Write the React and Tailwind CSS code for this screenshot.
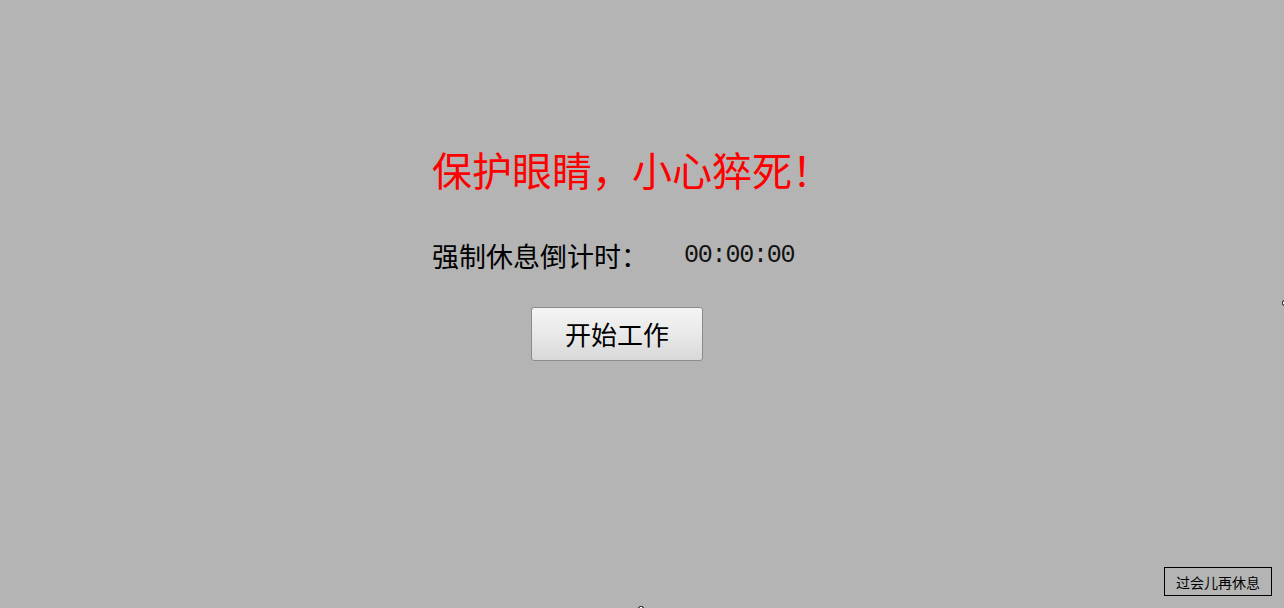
export default function App() {
  return (
    <div className="relative h-[608px] w-full overflow-hidden bg-[#b4b4b4] font-['Noto_Sans_CJK_SC',sans-serif]">
      <div className="ml-[432px] flex w-[370px] flex-col pt-[149px]">
        <h1 className="whitespace-nowrap text-[40px] leading-[40px] font-normal text-[#ff0000]">保护眼睛，小心猝死！</h1>
        <div className="mt-[53px] flex items-center whitespace-nowrap text-[27px] leading-[27px] text-black">
          <span>强制休息倒计时：</span>
          <span className="ml-[36px] font-['Liberation_Mono',monospace] text-[25px] tracking-[-1.2px] text-[#111]">00:00:00</span>
        </div>
        <button className="mx-auto mt-[38px] h-[54px] w-[172px] rounded-[3px] border border-[#8c8c8c] bg-gradient-to-b from-[#f3f3f3] via-[#e9e9e9] to-[#d8d8d8] text-[26px] leading-none text-black">
          开始工作
        </button>
      </div>
      <button className="absolute bottom-[12px] right-[12px] h-[29px] w-[108px] border border-black bg-[#b4b4b4] text-[14px] leading-none text-black">
        过会儿再休息
      </button>
      <div className="absolute right-[-3px] top-[300px] h-[6px] w-[5px] rounded-full border border-black bg-white"></div>
      <div className="absolute bottom-[-3px] left-[638px] h-[5px] w-[6px] rounded-full border border-black bg-white"></div>
    </div>
  );
}
